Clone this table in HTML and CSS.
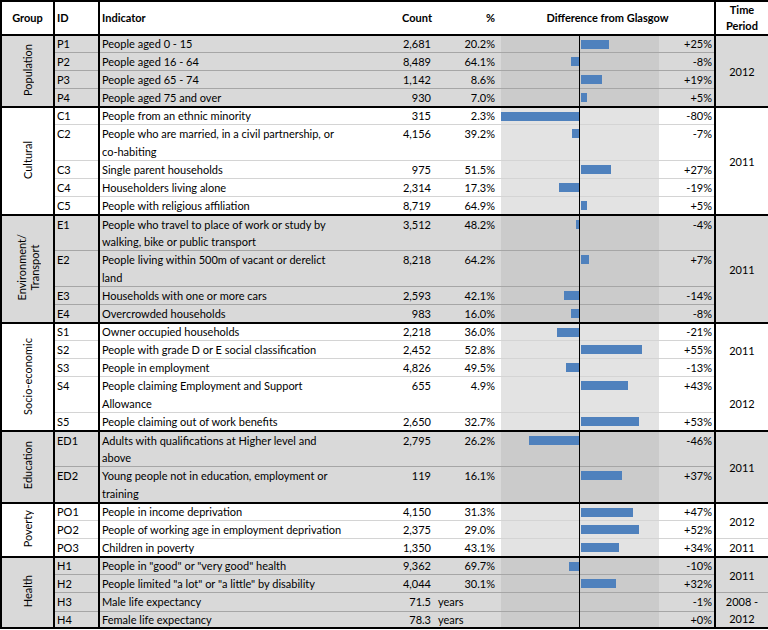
FILE: index.html
```
<!DOCTYPE html>
<html>
<head>
<meta charset="utf-8">
<link rel="stylesheet" href="styles.css">
</head>
<body>
<div class="wrap">
<table class="tbl">
<colgroup>
<col class="c-grp"><col class="c-id"><col class="c-ind"><col class="c-cnt"><col class="c-pct"><col class="c-ch"><col class="c-df"><col class="c-tp">
</colgroup>
<thead>
<tr class="hdr">
<th class="h-grp">Group</th><th class="h-id">ID</th><th class="h-ind">Indicator</th><th class="h-num">Count</th><th class="h-num h-pct">%</th><th class="h-diff" colspan="2">Difference from Glasgow</th><th class="h-tp">Time<br>Period</th>
</tr>
</thead>
<tbody>
<tr class="g first"><td class="grp" rowspan="4"><span class="rot">Population</span></td><td class="id">P1</td><td class="ind">People aged 0 - 15</td><td class="cnt">2,681</td><td class="pct">20.2%</td><td class="ch"><div class="bars"><div class="neg"></div><div class="pos"><i style="width:28px"></i></div></div></td><td class="df">+25%</td><td class="tp" rowspan="4">2012</td></tr>
<tr class="g"><td class="id">P2</td><td class="ind">People aged 16 - 64</td><td class="cnt">8,489</td><td class="pct">64.1%</td><td class="ch"><div class="bars"><div class="neg"><i style="width:9px"></i></div><div class="pos"></div></div></td><td class="df">-8%</td></tr>
<tr class="g"><td class="id">P3</td><td class="ind">People aged 65 - 74</td><td class="cnt">1,142</td><td class="pct">8.6%</td><td class="ch"><div class="bars"><div class="neg"></div><div class="pos"><i style="width:21px"></i></div></div></td><td class="df">+19%</td></tr>
<tr class="g"><td class="id">P4</td><td class="ind">People aged 75 and over</td><td class="cnt">930</td><td class="pct">7.0%</td><td class="ch"><div class="bars"><div class="neg"></div><div class="pos"><i style="width:6px"></i></div></div></td><td class="df">+5%</td></tr>

<tr class="w first"><td class="grp" rowspan="5"><span class="rot">Cultural</span></td><td class="id">C1</td><td class="ind">People from an ethnic minority</td><td class="cnt">315</td><td class="pct">2.3%</td><td class="ch"><div class="bars"><div class="neg"><i style="width:79px"></i></div><div class="pos"></div></div></td><td class="df">-80%</td><td class="tp" rowspan="5">2011</td></tr>
<tr class="w two"><td class="id">C2</td><td class="ind">People who are married, in a civil partnership, or<br>co-habiting</td><td class="cnt">4,156</td><td class="pct">39.2%</td><td class="ch"><div class="bars"><div class="neg"><i style="width:8px"></i></div><div class="pos"></div></div></td><td class="df">-7%</td></tr>
<tr class="w"><td class="id">C3</td><td class="ind">Single parent households</td><td class="cnt">975</td><td class="pct">51.5%</td><td class="ch"><div class="bars"><div class="neg"></div><div class="pos"><i style="width:30px"></i></div></div></td><td class="df">+27%</td></tr>
<tr class="w"><td class="id">C4</td><td class="ind">Householders living alone</td><td class="cnt">2,314</td><td class="pct">17.3%</td><td class="ch"><div class="bars"><div class="neg"><i style="width:21px"></i></div><div class="pos"></div></div></td><td class="df">-19%</td></tr>
<tr class="w"><td class="id">C5</td><td class="ind">People with religious affiliation</td><td class="cnt">8,719</td><td class="pct">64.9%</td><td class="ch"><div class="bars"><div class="neg"></div><div class="pos"><i style="width:6px"></i></div></div></td><td class="df">+5%</td></tr>

<tr class="g first two"><td class="grp" rowspan="4"><span class="rot">Environment/<br>Transport</span></td><td class="id">E1</td><td class="ind">People who travel to place of work or study by<br>walking, bike or public transport</td><td class="cnt">3,512</td><td class="pct">48.2%</td><td class="ch"><div class="bars"><div class="neg"><i style="width:4px"></i></div><div class="pos"></div></div></td><td class="df">-4%</td><td class="tp" rowspan="4">2011</td></tr>
<tr class="g two"><td class="id">E2</td><td class="ind">People living within 500m of vacant or derelict<br>land</td><td class="cnt">8,218</td><td class="pct">64.2%</td><td class="ch"><div class="bars"><div class="neg"></div><div class="pos"><i style="width:8px"></i></div></div></td><td class="df">+7%</td></tr>
<tr class="g"><td class="id">E3</td><td class="ind">Households with one or more cars</td><td class="cnt">2,593</td><td class="pct">42.1%</td><td class="ch"><div class="bars"><div class="neg"><i style="width:16px"></i></div><div class="pos"></div></div></td><td class="df">-14%</td></tr>
<tr class="g"><td class="id">E4</td><td class="ind">Overcrowded households</td><td class="cnt">983</td><td class="pct">16.0%</td><td class="ch"><div class="bars"><div class="neg"><i style="width:9px"></i></div><div class="pos"></div></div></td><td class="df">-8%</td></tr>

<tr class="w first"><td class="grp" rowspan="5"><span class="rot">Socio-economic</span></td><td class="id">S1</td><td class="ind">Owner occupied households</td><td class="cnt">2,218</td><td class="pct">36.0%</td><td class="ch"><div class="bars"><div class="neg"><i style="width:23px"></i></div><div class="pos"></div></div></td><td class="df">-21%</td><td class="tp tp-open" rowspan="3">2011</td></tr>
<tr class="w"><td class="id">S2</td><td class="ind">People with grade D or E social classification</td><td class="cnt">2,452</td><td class="pct">52.8%</td><td class="ch"><div class="bars"><div class="neg"></div><div class="pos"><i style="width:61px"></i></div></div></td><td class="df">+55%</td></tr>
<tr class="w"><td class="id">S3</td><td class="ind">People in employment</td><td class="cnt">4,826</td><td class="pct">49.5%</td><td class="ch"><div class="bars"><div class="neg"><i style="width:14px"></i></div><div class="pos"></div></div></td><td class="df">-13%</td></tr>
<tr class="w two"><td class="id">S4</td><td class="ind">People claiming Employment and Support<br>Allowance</td><td class="cnt">655</td><td class="pct">4.9%</td><td class="ch"><div class="bars"><div class="neg"></div><div class="pos"><i style="width:47px"></i></div></div></td><td class="df">+43%</td><td class="tp tp-open" rowspan="2">2012</td></tr>
<tr class="w"><td class="id">S5</td><td class="ind">People claiming out of work benefits</td><td class="cnt">2,650</td><td class="pct">32.7%</td><td class="ch"><div class="bars"><div class="neg"></div><div class="pos"><i style="width:58px"></i></div></div></td><td class="df">+53%</td></tr>

<tr class="g first two"><td class="grp" rowspan="2"><span class="rot">Education</span></td><td class="id">ED1</td><td class="ind">Adults with qualifications at Higher level and<br>above</td><td class="cnt">2,795</td><td class="pct">26.2%</td><td class="ch"><div class="bars"><div class="neg"><i style="width:51px"></i></div><div class="pos"></div></div></td><td class="df">-46%</td><td class="tp" rowspan="2">2011</td></tr>
<tr class="g two"><td class="id">ED2</td><td class="ind">Young people not in education, employment or<br>training</td><td class="cnt">119</td><td class="pct">16.1%</td><td class="ch"><div class="bars"><div class="neg"></div><div class="pos"><i style="width:41px"></i></div></div></td><td class="df">+37%</td></tr>

<tr class="w first"><td class="grp" rowspan="3"><span class="rot">Poverty</span></td><td class="id">PO1</td><td class="ind">People in income deprivation</td><td class="cnt">4,150</td><td class="pct">31.3%</td><td class="ch"><div class="bars"><div class="neg"></div><div class="pos"><i style="width:52px"></i></div></div></td><td class="df">+47%</td><td class="tp" rowspan="2">2012</td></tr>
<tr class="w"><td class="id">PO2</td><td class="ind">People of working age in employment deprivation</td><td class="cnt">2,375</td><td class="pct">29.0%</td><td class="ch"><div class="bars"><div class="neg"></div><div class="pos"><i style="width:58px"></i></div></div></td><td class="df">+52%</td></tr>
<tr class="w"><td class="id">PO3</td><td class="ind">Children in poverty</td><td class="cnt">1,350</td><td class="pct">43.1%</td><td class="ch"><div class="bars"><div class="neg"></div><div class="pos"><i style="width:38px"></i></div></div></td><td class="df">+34%</td><td class="tp">2011</td></tr>

<tr class="g first"><td class="grp" rowspan="4"><span class="rot">Health</span></td><td class="id">H1</td><td class="ind">People in "good" or "very good" health</td><td class="cnt">9,362</td><td class="pct">69.7%</td><td class="ch"><div class="bars"><div class="neg"><i style="width:11px"></i></div><div class="pos"></div></div></td><td class="df">-10%</td><td class="tp" rowspan="2">2011</td></tr>
<tr class="g"><td class="id">H2</td><td class="ind">People limited "a lot" or "a little" by disability</td><td class="cnt">4,044</td><td class="pct">30.1%</td><td class="ch"><div class="bars"><div class="neg"></div><div class="pos"><i style="width:35px"></i></div></div></td><td class="df">+32%</td></tr>
<tr class="g"><td class="id">H3</td><td class="ind">Male life expectancy</td><td class="cnt">71.5</td><td class="pct yrs">years</td><td class="ch"><div class="bars"><div class="neg"><i style="width:1px"></i></div><div class="pos"></div></div></td><td class="df">-1%</td><td class="tp" rowspan="2">2008 -<br>2012</td></tr>
<tr class="g last"><td class="id">H4</td><td class="ind">Female life expectancy</td><td class="cnt">78.3</td><td class="pct yrs">years</td><td class="ch"><div class="bars"><div class="neg"></div><div class="pos"></div></div></td><td class="df">+0%</td></tr>
</tbody>
</table>
<div class="axis"></div>
</div>
</body>
</html>
```
FILE: styles.css
```
html, body {
  margin: 0;
  padding: 0;
  background: #fff;
}
body {
  font-family: Lato, "Open Sans", "Liberation Sans", sans-serif;
  font-size: 11px;
  color: #000;
}
.wrap {
  position: relative;
  width: 768px;
}
.tbl {
  border-collapse: collapse;
  table-layout: fixed;
  width: 768px;
  border: 2px solid #000;
}
.c-grp { width: 53px; }
.c-id { width: 45px; }
.c-ind { width: 282px; }
.c-cnt { width: 54px; }
.c-pct { width: 66px; }
.c-ch { width: 158px; }
.c-df { width: 56px; }
.c-tp { width: 54px; }

.tbl th, .tbl td {
  padding: 0 3px;
  white-space: nowrap;
  overflow: hidden;
}
.tbl td {
  height: 17px;
  line-height: 17px;
  vertical-align: top;
}
.hdr th {
  height: 32px;
  line-height: 16px;
  font-weight: bold;
  vertical-align: middle;
  border-bottom: 2px solid #000;
}
.h-grp { text-align: center; border-right: 2px solid #000; }
.h-id { text-align: left; border-right: 2px solid #000; padding-left: 2px !important; }
.h-ind { text-align: left; padding-left: 2px !important; }
.h-num { text-align: right; }
.h-pct { padding-right: 6px !important; }
.h-diff { text-align: center; }
.h-tp { text-align: center; border-left: 2px solid #000; }

.g td { background: #d9d9d9; border-bottom: 1px solid #a6a6a6; }
.w td { background: #fff; border-bottom: 1px solid #d4d4d4; }
.tbl .first td {
  border-top: 2px solid #000;
  height: 16px;
  line-height: 16px;
}
.tbl .two td { line-height: 17.5px; }
.tbl .first.two td { line-height: 17px; }
.tbl .last td {
  height: 15px;
  line-height: 15px;
}

.grp {
  border-right: 2px solid #000;
  text-align: center;
  vertical-align: middle !important;
  padding: 0 !important;
}
.tbl td.grp { line-height: 13px; }
.rot {
  display: inline-block;
  writing-mode: vertical-rl;
  transform: rotate(180deg);
  line-height: 13px;
  font-size: 11px;
}
.id { border-right: 2px solid #000; padding-left: 2px !important; }
.ind { text-align: left; padding-left: 2px !important; }
.cnt { text-align: right; padding-right: 4px !important; }
.pct { text-align: right; padding-right: 6px !important; }
.pct.yrs { text-align: left; padding-left: 3px; }
.tbl td.ch { padding: 0; background: #e3e3e3; }
.g td.ch { background: #cbcbcb; }
.df { text-align: right; padding-right: 2px !important; }
.tp {
  text-align: center;
  vertical-align: middle !important;
  border-left: 2px solid #000;
}
.tbl td.tp { line-height: 17px; }
.w td.tp-open { border-bottom-color: transparent; }

.bars {
  display: flex;
  height: 15px;
}
.neg {
  width: 79px;
  display: flex;
  justify-content: flex-end;
  align-items: flex-start;
}
.pos {
  width: 78px;
  padding-left: 1px;
  display: flex;
  align-items: flex-start;
}
.bars i {
  display: block;
  height: 9px;
  margin-top: 4px;
  background: #4f81bd;
}
.axis {
  position: absolute;
  left: 579px;
  top: 35px;
  bottom: 2px;
  width: 1px;
  background: #000;
}
```
